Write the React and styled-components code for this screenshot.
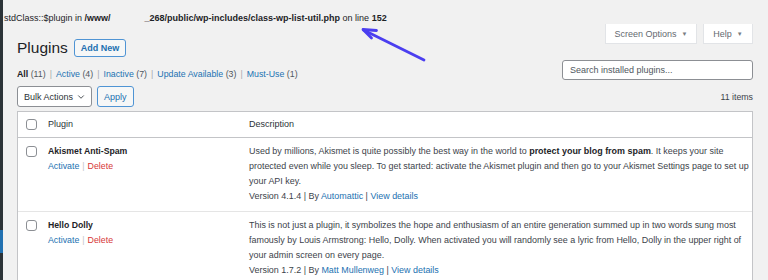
import React from 'react';
import styled, { createGlobalStyle } from 'styled-components';
import { ChevronDown } from 'lucide-react';

const GlobalStyle = createGlobalStyle`
  body {
    margin: 0;
    background: #f1f1f1;
    font-family: "Liberation Sans", Arial, sans-serif;
    color: #3c434a;
  }
`;

const Page = styled.div`
  position: relative;
  display: flex;
  height: 280px;
  overflow: hidden;
`;

const Sidebar = styled.div`
  width: 3px;
  flex-shrink: 0;
  background: #2c3338;
  padding-top: 230px;
  .current {
    height: 23px;
    background: #2271b1;
  }
`;

const Main = styled.div`
  flex: 1;
  display: flex;
  flex-direction: column;
  min-width: 0;
`;

const ErrorLine = styled.div`
  margin-top: 12px;
  padding-left: 1px;
  font-size: 9px;
  line-height: 12px;
  color: #1d2327;
  white-space: nowrap;
  b { font-weight: 700; }
  .redacted {
    display: inline-block;
    width: 34px;
  }
`;

const Wrap = styled.div`
  padding: 0 15px 0 14px;
`;

const HeaderRow = styled.div`
  display: flex;
  justify-content: space-between;
  align-items: flex-start;
`;

const TitleRow = styled.div`
  margin-top: 15px;
  display: flex;
  align-items: center;
  height: 18px;
  h1 {
    margin: 0;
    font-size: 15.5px;
    font-weight: 400;
    color: #1d2327;
    line-height: 18px;
  }
`;

const OutlineButton = styled.span`
  display: inline-flex;
  align-items: center;
  justify-content: center;
  box-sizing: border-box;
  height: ${p => p.$h || 18}px;
  padding: 0 ${p => p.$px || 6}px;
  margin-left: ${p => p.$ml || 0}px;
  border: 1px solid #4f94d4;
  border-radius: 3px;
  background: #f6f7f7;
  color: #2271b1;
  font-size: 9px;
  font-weight: ${p => (p.$bold ? 700 : 400)};
`;

const ScreenMeta = styled.div`
  display: flex;
  gap: 6px;
`;

const MetaTab = styled.span`
  display: inline-flex;
  align-items: center;
  justify-content: center;
  box-sizing: border-box;
  width: ${p => p.$w}px;
  height: 20px;
  background: #fff;
  border: 1px solid #e2e4e7;
  border-top: none;
  color: #646970;
  font-size: 9px;
  .caret {
    font-size: 6px;
    margin-left: 5px;
    color: #787c82;
  }
`;

const FilterRow = styled.div`
  display: flex;
  justify-content: space-between;
  align-items: flex-end;
  margin-top: 3px;
  height: 20px;
`;

const Filters = styled.div`
  font-size: 8.8px;
  line-height: 14px;
  margin-bottom: -1px;
  color: #50575e;
  white-space: nowrap;
  b { color: #1d2327; font-weight: 700; }
  a { color: #2271b1; text-decoration: none; }
  .sep { color: #a7aaad; margin: 0 4px; }
`;

const Search = styled.input`
  box-sizing: border-box;
  width: 191px;
  height: 20px;
  border: 1px solid #8c8f94;
  border-radius: 3px;
  padding: 0 7px;
  font-family: inherit;
  font-size: 9px;
  background: #fff;
  &::placeholder { color: #50575e; }
`;

const NavRow = styled.div`
  display: flex;
  align-items: center;
  justify-content: space-between;
  margin-top: 6px;
  height: 21px;
  .count {
    font-size: 8.8px;
    color: #3c434a;
  }
`;

const NavLeft = styled.div`
  display: flex;
  align-items: center;
`;

const BulkSelect = styled.span`
  display: inline-flex;
  align-items: center;
  justify-content: space-between;
  box-sizing: border-box;
  width: 75px;
  height: 21px;
  padding: 0 5px 0 6px;
  background: #fff;
  border: 1px solid #8c8f94;
  border-radius: 3px;
  color: #2c3338;
  font-size: 9px;
`;

const Table = styled.div`
  margin-top: 4px;
  background: #fff;
  border: 1px solid #c3c4c7;
`;

const Row = styled.div`
  display: grid;
  grid-template-columns: 30px 201px 1fr;
  padding: ${p => (p.$head ? '0' : '6px 0 7px')};
  height: ${p => (p.$head ? '25px' : 'auto')};
  align-items: ${p => (p.$head ? 'center' : 'start')};
  border-bottom: 1px solid ${p => (p.$head ? '#c3c4c7' : '#e5e5e5')};
  font-size: ${p => (p.$head ? '9px' : '8.95px')};
  color: ${p => (p.$head ? '#2c3338' : '#3c434a')};
  line-height: 15px;
`;

const Check = styled.span`
  display: block;
  width: 11px;
  height: 11px;
  box-sizing: border-box;
  margin-left: 8px;
  margin-top: ${p => (p.$head ? 0 : 2)}px;
  border: 1px solid #8c8f94;
  border-radius: 3px;
  background: #fff;
`;

const PluginName = styled.div`
  font-size: 8.7px;
  font-weight: 700;
  color: #1d2327;
`;

const Actions = styled.div`
  font-size: 8.8px;
  a { color: #2271b1; text-decoration: none; }
  .delete { color: #d63638; }
  .sep { color: #c3c4c7; margin: 0 3px; }
`;

const Desc = styled.div`
  b { font-weight: 700; color: #1d2327; }
  a { color: #2271b1; text-decoration: none; }
`;

const Arrow = styled.svg`
  position: absolute;
  left: 360px;
  top: 26px;
  overflow: visible;
`;

const plugins = [
  {
    name: 'Akismet Anti-Spam',
    lines: [
      <>Used by millions, Akismet is quite possibly the best way in the world to <b>protect your blog from spam</b>. It keeps your site</>,
      'protected even while you sleep. To get started: activate the Akismet plugin and then go to your Akismet Settings page to set up',
      'your API key.',
    ],
    version: '4.1.4',
    author: 'Automattic',
  },
  {
    name: 'Hello Dolly',
    lines: [
      'This is not just a plugin, it symbolizes the hope and enthusiasm of an entire generation summed up in two words sung most',
      'famously by Louis Armstrong: Hello, Dolly. When activated you will randomly see a lyric from Hello, Dolly in the upper right of',
      'your admin screen on every page.',
    ],
    version: '1.7.2',
    author: 'Matt Mullenweg',
  },
];

const filters = [
  ['Active', 4],
  ['Inactive', 7],
  ['Update Available', 3],
  ['Must-Use', 1],
];

export default function App() {
  return (
    <Page>
      <GlobalStyle />
      <Sidebar><div className="current" /></Sidebar>
      <Main>
        <ErrorLine>
          stdClass::$plugin in <b>/www/</b><span className="redacted" /><b>_268/public/wp-includes/class-wp-list-util.php</b> on line <b>152</b>
        </ErrorLine>
        <Wrap>
          <HeaderRow>
            <TitleRow>
              <h1>Plugins</h1>
              <OutlineButton $ml={6} $bold>Add New</OutlineButton>
            </TitleRow>
            <ScreenMeta>
              <MetaTab $w={92}>Screen Options<span className="caret">▼</span></MetaTab>
              <MetaTab $w={50}>Help<span className="caret">▼</span></MetaTab>
            </ScreenMeta>
          </HeaderRow>

          <FilterRow>
            <Filters>
              <b>All</b> (11)
              {filters.map(([label, n]) => (
                <React.Fragment key={label}>
                  <span className="sep">|</span><a>{label}</a> ({n})
                </React.Fragment>
              ))}
            </Filters>
            <Search placeholder="Search installed plugins..." />
          </FilterRow>

          <NavRow>
            <NavLeft>
              <BulkSelect>Bulk Actions <ChevronDown size={10} strokeWidth={2} /></BulkSelect>
              <OutlineButton $h={21} $px={6} $ml={5}>Apply</OutlineButton>
            </NavLeft>
            <span className="count">11 items</span>
          </NavRow>

          <Table>
            <Row $head>
              <Check $head />
              <span>Plugin</span>
              <span>Description</span>
            </Row>
            {plugins.map(p => (
              <Row key={p.name}>
                <Check />
                <div>
                  <PluginName>{p.name}</PluginName>
                  <Actions>
                    <a>Activate</a><span className="sep">|</span><a className="delete">Delete</a>
                  </Actions>
                </div>
                <Desc>
                  {p.lines.map((l, i) => <div key={i}>{l}</div>)}
                  <div>Version {p.version} | By <a>{p.author}</a> | <a>View details</a></div>
                </Desc>
              </Row>
            ))}
          </Table>
        </Wrap>
      </Main>
      <Arrow width="70" height="40" viewBox="0 0 70 40">
        <line x1="3.5" y1="4" x2="64" y2="34" stroke="#4b3ef0" strokeWidth="2.8" strokeLinecap="round" />
        <polyline points="16.5,4.5 3,3.5 11.5,12" fill="none" stroke="#4b3ef0" strokeWidth="2.8" strokeLinecap="round" strokeLinejoin="round" />
      </Arrow>
    </Page>
  );
}
